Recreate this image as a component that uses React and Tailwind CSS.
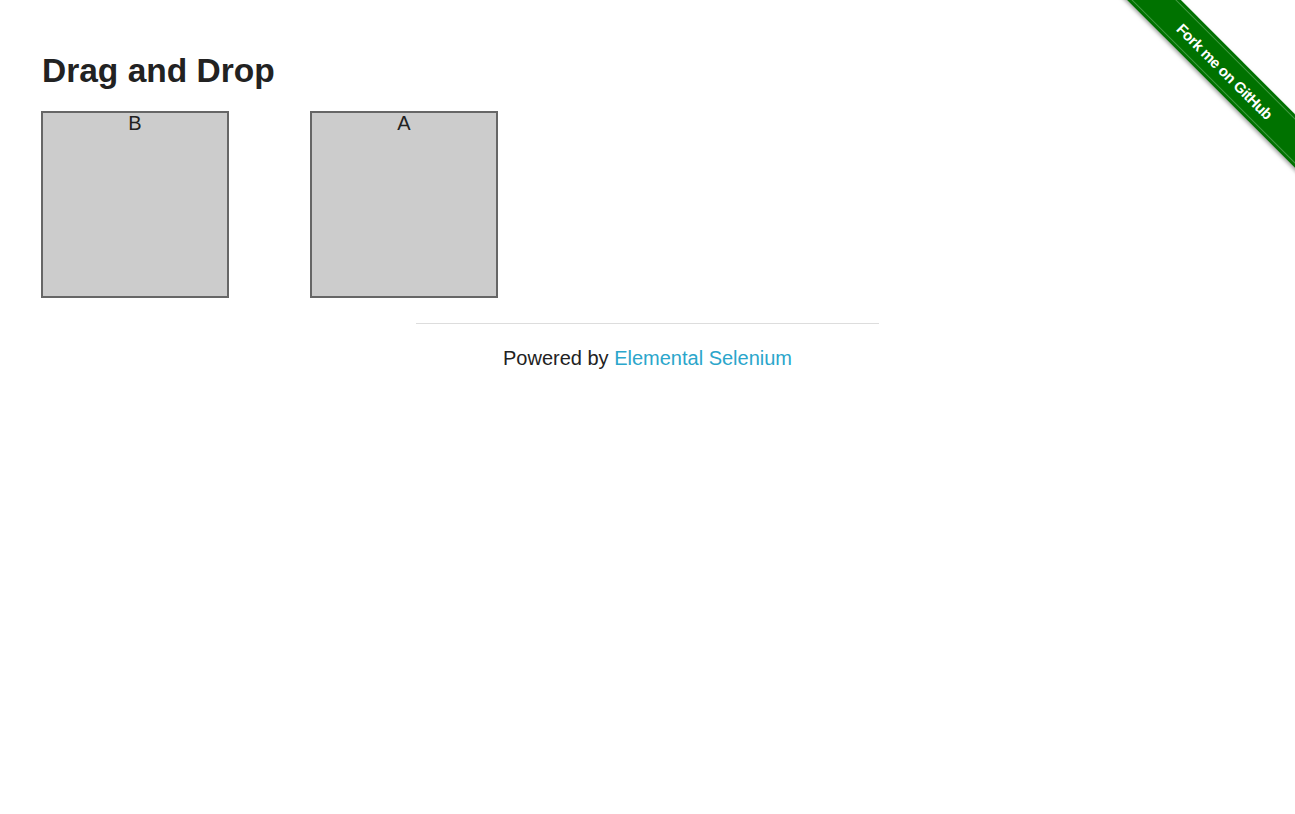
import React from 'react';

// Fork ribbon in the top-right corner
function ForkRibbon() {
  return (
    <a
      href="#"
      className="absolute top-0 right-0 block w-[186px] h-[186px] overflow-hidden"
    >
      <div className="absolute left-[-19px] top-[52px] w-[270px] h-[38px] rotate-45 bg-[#007200] shadow-[0_2px_4px_rgba(0,0,0,0.35)] flex items-center">
        <div className="w-full h-[32px] border-y border-[#5da95d]/70 flex items-center justify-center">
          <span className="text-white font-bold text-[15px] leading-none tracking-[-0.4px]">
            Fork me on GitHub
          </span>
        </div>
      </div>
    </a>
  );
}

function Column({ label }) {
  return (
    <div className="w-[188px] h-[187px] border-2 border-[#666] bg-[#ccc] text-center text-[20px] leading-[20px] text-[#222] cursor-move">
      <header>{label}</header>
    </div>
  );
}

export default function App() {
  return (
    <div
      className="relative min-h-[814px] bg-white text-[#222]"
      style={{ fontFamily: '"Liberation Sans", Arial, Helvetica, sans-serif' }}
    >
      <ForkRibbon />

      <div className="pl-[41px] pt-[51px]">
        <h3 className="ml-px text-[33.5px] leading-[40px] font-bold">Drag and Drop</h3>
        <div className="mt-[20px] flex gap-[81px]">
          <Column label="B" />
          <Column label="A" />
        </div>
      </div>

      <div className="mt-[25px] flex flex-col items-center">
        <hr className="w-[463px] border-0 border-t border-[#ddd]" />
        <div className="mt-[20px] text-[20px] leading-[28px]">
          Powered by{' '}
          <a href="#" className="text-[#2ba6cb]">
            Elemental Selenium
          </a>
        </div>
      </div>
    </div>
  );
}
